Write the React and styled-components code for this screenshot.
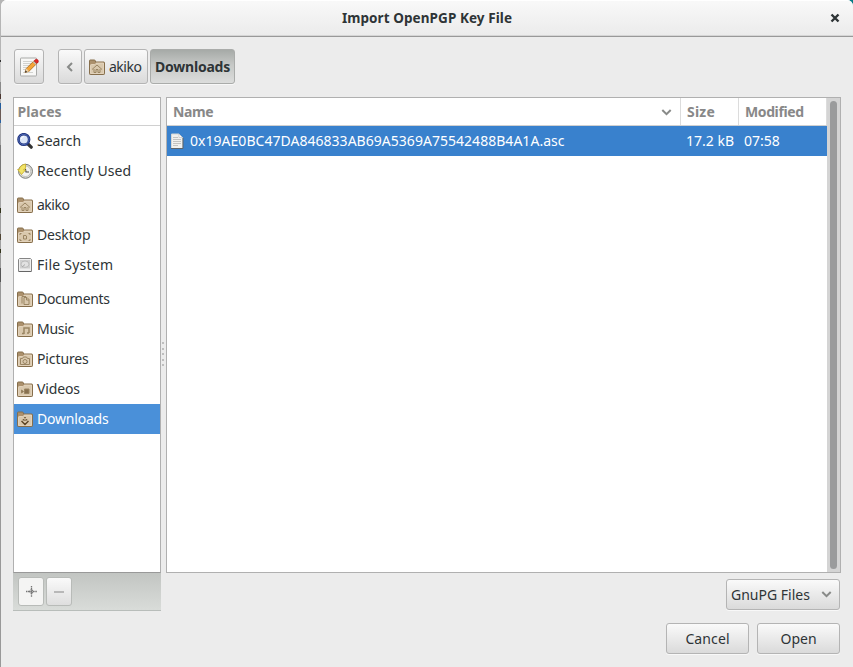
import React from "react";
import styled, { createGlobalStyle } from "styled-components";

const Global = createGlobalStyle`
  *{box-sizing:border-box}
  body{margin:0;background:#8f9191;overflow:hidden}
`;
const Desktop = styled.div`
  width:853px;height:667px;padding-left:1px;
  background:
    linear-gradient(#057a86,#057a86) right top/8px 8px no-repeat,
    linear-gradient(#b5b5b5 0 60px,#333 60px 62px,#c0c0c0 62px 82px,#8a8a8a 82px 94px,#4a3630 94px 99px,#b9b9b9 99px 103px,#245d9c 103px 109px,#6a5a55 109px 120px,#2c62a0 120px 123px,#a5a5a5 123px 145px,#777 145px 180px,#a5a5a5 180px 208px,#33341c 208px 213px,#9c9c9c 213px 234px,#4f4434 234px 240px,#a0a0a0 240px 249px,#33341c 249px 253px,#999 253px 268px,#555 268px 282px,#999 282px);
`;
const Window = styled.div`
  width:852px;height:667px;display:flex;flex-direction:column;
  background:#ececec;border-radius:6px 6px 0 0;overflow:hidden;
  font:14px/20px "Noto Sans",sans-serif;color:#2e3436;
`;
const TitleBar = styled.header`
  height:37px;flex:none;display:grid;grid-template-columns:1fr auto 1fr;align-items:center;
  background:linear-gradient(#f9f9f9,#ebebeb);border-bottom:1px solid #999;
  box-shadow:inset 0 -1px #d5d5d5, inset 0 1px #fff;
`;
const Label = styled.span`
  white-space:nowrap;letter-spacing:${p => p.$ls || 0}px;font-weight:${p => (p.$bold ? 700 : 400)};
  font-size:${p => p.$size || 14}px;
`;
const Close = styled.button`
  justify-self:end;margin-right:13px;width:10px;height:10px;padding:0;border:0;background:none;display:flex;
`;
const Button = styled.button`
  font:inherit;color:inherit;display:flex;align-items:center;justify-content:center;gap:4px;padding:0;
  width:${p => p.$w}px;height:${p => p.$h}px;border:1px solid #b4b4b4;border-radius:3px;
  background:linear-gradient(#fafafa,#dadada);box-shadow:0 1px #f8f8f8;
`;
const FolderButton = styled(Button)`justify-content:flex-start;padding-left:4px;`;
const ActiveButton = styled(Button)`
  background:linear-gradient(#a6aaa7,#c6c8c6 45%,#dcdddc);border-color:#aaacaa;
`;
const Toolbar = styled.nav`
  display:flex;height:61px;flex:none;padding:12px 0 0 13px;
`;
const Path = styled.div`display:flex;gap:2px;margin-left:14px;`;
const Body = styled.main`display:flex;height:514px;flex:none;padding-left:12px;margin-top:-1px;`;
const Sidebar = styled.aside`width:148px;`;
const Places = styled.section`
  height:476px;border:1px solid #b0b0b0;border-bottom-color:#999;background:#fff;
`;
const Heading = styled.div`
  height:28px;border-bottom:1px solid #d0d0d0;padding:4px 0 0 3.5px;color:#888;display:flex;
`;
const Place = styled.div`
  height:30px;display:flex;align-items:center;gap:4px;padding-left:3px;
  margin-top:${p => (p.$gap ? 4 : 0)}px;
  background:${p => (p.$on ? "#4a90d9" : "transparent")};color:${p => (p.$on ? "#fff" : "inherit")};
`;
const Actions = styled.div`
  height:38px;display:flex;gap:2px;padding:4px 5px;border-bottom:1px solid #b8bdba;
  background:linear-gradient(#c2c5c2,#d9dcd9);
`;
const SmallButton = styled(Button)`
  width:26px;height:29px;box-shadow:none;border-color:#b8bbb8;background:${p => (p.$flat ? "#f4f4f3" : "linear-gradient(#fafafa,#dedede)")};
`;
const Grip = styled.div`
  width:5px;height:476px;display:flex;flex-direction:column;align-items:flex-start;justify-content:center;gap:3.5px;padding:38px 0 0 1px;
`;
const Dot = styled.i`width:2px;height:2px;background:#bebebe;`;
const Files = styled.section`
  width:675px;height:476px;border:1px solid #b0b0b0;background:#fff;display:flex;
`;
const Table = styled.div`width:660px;`;
const Columns = styled.div`
  display:grid;grid-template-columns:514px 58px 88px;height:28px;color:#888;border-bottom:1px solid #d0d0d0;
`;
const Column = styled.div`
  display:flex;justify-content:space-between;align-items:center;padding:1px 8px 0 6px;border-right:1px solid #dcdcdc;
`;
const File = styled.div`
  display:grid;grid-template-columns:519px 58px 83px;align-items:center;height:30px;background:#3981cd;color:#fff;
`;
const FileName = styled.div`display:flex;align-items:center;gap:4px;padding-left:3px;`;
const Track = styled.div`width:13px;background:#d4d4d4;padding:3px 2px 3px 3px;`;
const Thumb = styled.div`height:468px;width:7px;border-radius:4px;background:#9a9b9c;`;
const Footer = styled.footer`
  display:flex;flex-direction:column;align-items:flex-end;gap:13px;padding-right:13px;margin-top:-32px;
`;
const Row = styled.div`display:flex;gap:8px;`;
const Select = styled(Button)`justify-content:space-between;padding:0 7px 0 4px;`;

const glyphs = {
  home: <path d="m3.5 10.5 5-4.5 5 4.5M5.500 10v3.500h2v-3h2v3h2V10" />,
  desktop: <path d="M3.500 8V6.500H5m7 0h1.500V8m-10 4v1.500H5m7 0h1.500V12M7 8.500h2.500l.5.5v3H7z" />,
  documents: <path d="M7.500 6.500h3l2 2v5h-5zM10 6.500V9h2.500M5.500 12.500v-7h4" />,
  music: <path d="M7.500 13V7h5v5M5.500 12.500h2m3-.5h2" strokeWidth="1.500" />,
  pictures: <><path d="M4 7.500h2L7 6h3l1 1.500h2v6H4z" /><circle cx="8.500" cy="10.500" r="2" /></>,
  videos: <path d="M8 8h4.500v4.500H8zM5 9v3l2-1.500z" fill="#87704f" />,
  downloads: <path d="m5 10 3.500 3.500L12 10M8.500 6v1.200m0 1.300v1.200M6.300 8.800h1m2.400 0h1" stroke="#5b4424" strokeWidth="1.400" />,
};
const Folder = ({ kind }) => (
  <svg width="16" height="16" viewBox="0 0 16 16">
    <path d="M.5 14V1.700Q.5 1 1.200 1h4.100q.700 0 .900.600L6.600 3h8.200q.7 0 .7.700V14.700q0 .800-.8.800H1.300q-.8 0-.8-.8z" fill="#ab906c" stroke="#866e4b" />
    <path d="M1.500 6.300q0-.8.8-.8h3.500q.7 0 1-.6l.4-.9h7.300v10.500h-13z" fill="#d9c8ad" stroke="#eadcc6" strokeWidth=".8" />
    <g fill="none" stroke="#9a8563" transform="translate(-.5 0)">{glyphs[kind]}</g>
  </svg>
);
const SearchIcon = () => (
  <svg width="16" height="16" viewBox="0 0 16 16">
    <path d="m11 11 3.200 3.200" stroke="#333" strokeWidth="3.200" strokeLinecap="round" />
    <circle cx="6.800" cy="6.500" r="5.300" fill="#dce6f8" stroke="#22357f" strokeWidth="2.600" />
    <circle cx="6.800" cy="6.500" r="5.200" fill="none" stroke="#4d69b5" strokeWidth="1" />
    <path d="M4.200 6a3 3 0 0 1 3-2.500" stroke="#fff" fill="none" />
  </svg>
);
const RecentIcon = () => (
  <svg width="16" height="16" viewBox="0 0 16 16">
    <circle cx="8.500" cy="8.300" r="7" fill="#d9d9d5" stroke="#7c7e79" />
    <circle cx="8.500" cy="8.300" r="5.200" fill="#f2f2ef" stroke="#b5b5b2" strokeWidth=".7" />
    <path d="m8.500 6 .5 3h3" fill="none" stroke="#444" strokeWidth="1.100" />
    <path d="M.6 6.500h1.700Q3 2 8.500 1v4.500Q6.500 6 6.500 7H8.500l-4 4.500z" fill="#f2e468" stroke="#c8ae2c" strokeWidth=".8" />
  </svg>
);
const DriveIcon = () => (
  <svg width="16" height="16" viewBox="0 0 16 16">
    <path d="M2.500 1.500h11l1 1v12h-13v-12z" fill="#efefef" stroke="#858585" />
    <path d="M3 3h10v8.500H3z" fill="#d0d0d0" />
    <ellipse cx="8" cy="7.200" rx="4" ry="3.200" fill="#e2e2e2" stroke="#b4b4b4" strokeWidth=".8" />
    <path d="m5 10 3-2.500" stroke="#aaa" />
    <path d="M2 14.500h12" stroke="#666" />
  </svg>
);
const DocIcon = () => (
  <svg width="16" height="16" viewBox="0 0 16 16">
    <path d="M1.500 1H9l3.500 3.500v11h-11z" fill="#f0f0ee" stroke="#d5d6d3" />
    <path d="M1 15.500h12V5" fill="none" stroke="#5f6468" />
    <path d="M9 1v3.500h3.500z" fill="#fff" stroke="#bbb" strokeWidth=".6" />
    <path d="M3 4.500h5m-5 2h8m-8 2h8m-8 2h8m-8 2h5" stroke="#c3c3c1" />
  </svg>
);
const EditIcon = () => (
  <svg width="20" height="20" viewBox="0 0 20 20">
    <path d="M2 1h15q.5 0 .5.500v17q0 .500-.5.500H2q-.5 0-.5-.500v-17Q1.500 1 2 1z" fill="#f8f8f7" stroke="#a9aaa8" />
    <path d="M4 4.500h9M4 6.500h8M4 8.500h6M4 10.500h4M4 12.500h3M4 15.500h10" stroke="#d2d3d0" />
    <path d="m6 15.500 1.300-4L15 3.800 17.800 6.500 10.100 14.200z" fill="#f4a437" stroke="#a86718" strokeWidth=".8" />
    <path d="m6 15.500 1.300-4 2.800 2.700z" fill="#e9cfa7" />
    <path d="m6 15.500.6-2 1.500 1.500z" fill="#222" />
    <path d="m13.800 5 2.700 2.700 1-1L14.800 4z" fill="#bbb" />
    <path d="m15 3.800 1.300-1.300q1.500-.8 2.500.3t.4 2.400l-1.400 1.300z" fill="#dc2929" stroke="#b31212" strokeWidth=".5" />
  </svg>
);
const Down = () => (
  <svg width="11" height="7" viewBox="0 0 11 7"><path d="M1.300 1 5.500 5.200 9.700 1" fill="none" stroke="#888a88" strokeWidth="2" /></svg>
);

const places = [
  { name: "Search", icon: <SearchIcon />, ls: -0.05 },
  { name: "Recently Used", icon: <RecentIcon />, ls: 0.12 },
  { name: "akiko", icon: <Folder kind="home" />, gap: true, ls: -0.5 },
  { name: "Desktop", icon: <Folder kind="desktop" />, ls: -0.15 },
  { name: "File System", icon: <DriveIcon />, ls: 0.25 },
  { name: "Documents", icon: <Folder kind="documents" />, gap: true, ls: -0.3 },
  { name: "Music", icon: <Folder kind="music" />, ls: -0.3 },
  { name: "Pictures", icon: <Folder kind="pictures" />, ls: -0.12 },
  { name: "Videos", icon: <Folder kind="videos" />, ls: -0.15 },
  { name: "Downloads", icon: <Folder kind="downloads" />, ls: -0.2 },
];

export default function App() {
  return (
    <Desktop>
      <Global />
      <Window>
        <TitleBar>
          <span />
          <Label $bold $size={13.5} $ls={0.08}>Import OpenPGP Key File</Label>
          <Close aria-label="Close"><svg width="10" height="10"><path d="m1.500 1.500 7 7m0-7-7 7" stroke="#2e3436" strokeWidth="2.400" /></svg></Close>
        </TitleBar>
        <Toolbar>
          <Button $w={30} $h={35} aria-label="Type a file name"><EditIcon /></Button>
          <Path>
            <Button $w={24} $h={35} aria-label="Back"><svg width="9" height="10"><path d="M6 1 2 5l4 4" fill="none" stroke="#888a88" strokeWidth="2" /></svg></Button>
            <FolderButton $w={64} $h={35}><Folder kind="home" /><Label $ls={-0.5}>akiko</Label></FolderButton>
            <ActiveButton $w={85} $h={35}><Label $bold $ls={-0.2}>Downloads</Label></ActiveButton>
          </Path>
        </Toolbar>
        <Body>
          <Sidebar>
            <Places>
              <Heading><Label $bold $ls={0.05}>Places</Label></Heading>
              {places.map(({ name, icon, gap, ls }) => (
                <Place key={name} $gap={gap} $on={name === "Downloads"}>{icon}<Label $ls={ls}>{name}</Label></Place>
              ))}
            </Places>
            <Actions>
              <SmallButton $flat aria-label="Add"><svg width="11" height="11"><path d="M5.500 0v11M0 5.500h11M3.500 5.500l2-2 2 2-2 2z" fill="none" stroke="#777" strokeWidth="1.300" strokeDasharray="1.200 .5" /></svg></SmallButton>
              <SmallButton aria-label="Remove"><svg width="10" height="2"><path d="M0 1h10" stroke="#b8b8b8" strokeWidth="2" /></svg></SmallButton>
            </Actions>
          </Sidebar>
          <Grip><Dot /><Dot /><Dot /><Dot /><Dot /></Grip>
          <Files>
            <Table>
              <Columns>
                <Column><Label $bold $ls={-0.4}>Name</Label><Down /></Column>
                <Column><Label $bold $ls={0.2}>Size</Label></Column>
                <Column><Label $bold $ls={-0.4}>Modified</Label></Column>
              </Columns>
              <File>
                <FileName><DocIcon /><Label $ls={0.03}>0x19AE0BC47DA846833AB69A5369A75542488B4A1A.asc</Label></FileName>
                <Label>17.2 kB</Label><Label>07:58</Label>
              </File>
            </Table>
            <Track><Thumb /></Track>
          </Files>
        </Body>
        <Footer>
          <Select $w={114} $h={31}><Label>GnuPG Files</Label><Down /></Select>
          <Row>
            <Button $w={83} $h={31}><Label $ls={0.1}>Cancel</Label></Button>
            <Button $w={83} $h={31}><Label>Open</Label></Button>
          </Row>
        </Footer>
      </Window>
    </Desktop>
  );
}
